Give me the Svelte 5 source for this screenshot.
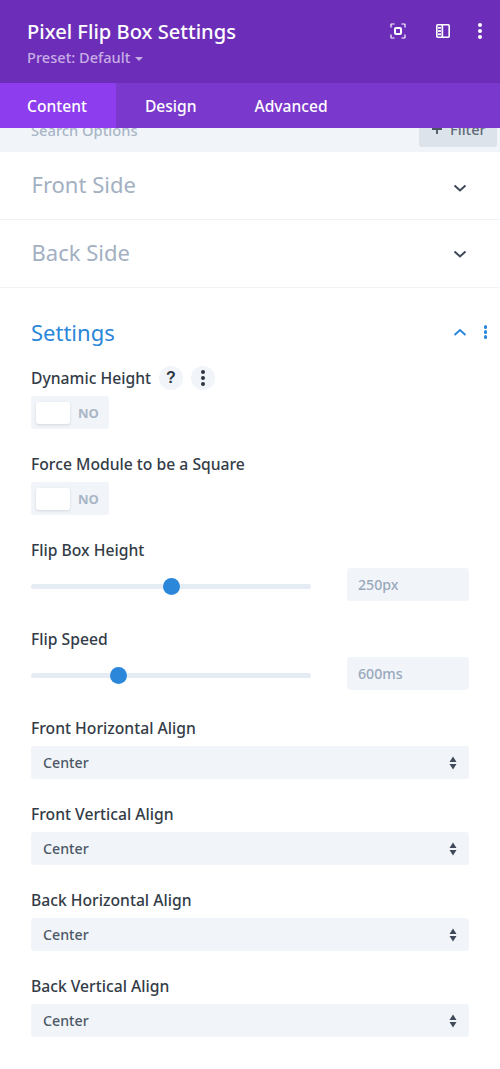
<script>
  const tabs = ['Content', 'Design', 'Advanced'];
  const closed = ['Front Side', 'Back Side'];
  const toggles = ['Force Module to be a Square'];
  const sliders = [
    { label: 'Flip Box Height', value: '250px', pos: 50.2 },
    { label: 'Flip Speed', value: '600ms', pos: 31.4 }
  ];
  const selects = ['Front Horizontal Align', 'Front Vertical Align', 'Back Horizontal Align', 'Back Vertical Align'];
</script>

<div class="panel">
  <header class="head">
    <div class="titles">
      <h1>Pixel Flip Box Settings</h1>
      <div class="preset">Preset: Default <span class="caret"></span></div>
    </div>
    <div class="head-icons">
      <svg width="16" height="16" viewBox="0 0 16 16" fill="none" stroke="#fff" stroke-width="1.2" aria-hidden="true">
        <path d="M1 4.5V1.5a.5.5 0 0 1 .5-.5h3M11.500 1h3a.5.5 0 0 1 .5.5v3M15 11.500v3a.5.5 0 0 1-.5.5h-3M4.500 15h-3a.5.5 0 0 1-.5-.5v-3" />
        <rect x="5" y="5" width="6" height="6" rx="1" stroke-width="2" />
      </svg>
      <svg width="14" height="14" viewBox="0 0 14 14" aria-hidden="true">
        <rect x="0.800" y="0.800" width="12.400" height="12.400" rx="1" fill="none" stroke="#fff" stroke-width="1.600" />
        <rect x="5.500" y="1" width="1.700" height="12" fill="#fff" />
        <rect x="2" y="3" width="3" height="1.700" fill="#fff" />
        <rect x="2" y="6.200" width="3" height="1.700" fill="#fff" />
        <rect x="2" y="9.400" width="3" height="1.700" fill="#fff" />
      </svg>
      <span class="dots white"><i></i><i></i><i></i></span>
    </div>
  </header>

  <nav class="tabs">
    {#each tabs as tab, i}
      <div class="tab" class:active={i === 0}>{tab}</div>
    {/each}
  </nav>

  <div class="search">
    <span class="search-text">Search Options</span>
    <span class="filter">
      <svg width="12" height="12" viewBox="0 0 12 12" aria-hidden="true"><path d="M6 1v10M1 6h10" stroke="#4b5563" stroke-width="1.800" /></svg>
      Filter
    </span>
  </div>

  {#each closed as name, i}
    <section class="group">
      <h2>{name}</h2>
      <svg class="chev" class:low={i === 0} width="14" height="9" viewBox="0 0 14 9" fill="none" stroke="#3e4a59" stroke-width="2" aria-hidden="true"><path d="M1.500 1.500 7 6.500l5.500-5" /></svg>
    </section>
  {/each}

  <section class="settings">
    <div class="settings-head">
      <h2>Settings</h2>
      <svg width="14" height="9" viewBox="0 0 14 9" fill="none" stroke="#2b87da" stroke-width="2" aria-hidden="true"><path d="M1.500 7 7 2l5.500 5" /></svg>
      <span class="dots blue"><i></i><i></i><i></i></span>
    </div>

    <div class="field">
      <div class="label">
        Dynamic Height
        <span class="round q">?</span>
        <span class="round"><span class="dots dark"><i></i><i></i><i></i></span></span>
      </div>
      <div class="toggle"><span class="knob"></span><span class="no">NO</span></div>
    </div>

    {#each toggles as label}
      <div class="field">
        <div class="label">{label}</div>
        <div class="toggle"><span class="knob"></span><span class="no">NO</span></div>
      </div>
    {/each}

    {#each sliders as s}
      <div class="field slider-field">
        <div class="label">{s.label}</div>
        <div class="slider-row">
          <div class="track"><span class="thumb" style="left: {s.pos}%"></span></div>
          <div class="value">{s.value}</div>
        </div>
      </div>
    {/each}

    {#each selects as label}
      <div class="field">
        <div class="label">{label}</div>
        <div class="select">
          Center
          <svg width="8" height="14" viewBox="0 0 8 14" fill="#3e4a59" aria-hidden="true"><path d="M4 0.500 7.500 6H.5zM4 13.500.5 8h7z" /></svg>
        </div>
      </div>
    {/each}
  </section>
</div>

<style>
  :global(body) {
    margin: 0;
    background: #fff;
  }
  .panel {
    width: 500px;
    height: 1069px;
    overflow: hidden;
    background: #fff;
    font-family: "Noto Sans", "Open Sans", sans-serif;
    color: #32373c;
  }
  .head {
    height: 83px;
    box-sizing: border-box;
    padding: 18px 18px 0 27px;
    background: #6c2eb9;
    display: flex;
    justify-content: space-between;
    align-items: flex-start;
  }
  h1 {
    margin: 0;
    font-size: 20.1px;
    line-height: 27px;
    font-weight: 500;
    color: #fff;
  }
  .preset {
    margin-top: 2px;
    font-size: 14.6px;
    line-height: 20px;
    font-weight: 500;
    color: #c7ace6;
  }
  .caret {
    display: inline-block;
    margin-left: 1px;
    vertical-align: 2px;
    border: 4px solid transparent;
    border-top-color: #c7ace6;
    border-bottom: 0;
  }
  .head-icons {
    display: flex;
    align-items: center;
    margin-top: 5px;
    height: 16px;
  }
  .head-icons svg:first-child {
    margin-right: 30px;
  }
  .head-icons svg:nth-child(2) {
    margin-right: 28px;
  }
  .dots {
    display: flex;
    flex-direction: column;
    gap: 2px;
  }
  .dots i {
    display: block;
    width: 4px;
    height: 4px;
    border-radius: 50%;
  }
  .dots.white i { background: #fff; }
  .dots.blue i { background: #2b87da; }
  .dots.dark i { background: #2f3540; }
  .tabs {
    display: flex;
    height: 45px;
    background: #7b38cc;
    position: relative;
    z-index: 1;
  }
  .tab {
    padding: 0 29px;
    font-size: 15.6px;
    font-weight: 500;
    line-height: 46px;
    color: #fff;
  }
  .tab.active {
    padding: 0 29px 0 27px;
    background: #8d3ded;
  }
  .search {
    height: 24px;
    background: #f1f5f9;
    display: flex;
    justify-content: space-between;
    align-items: flex-end;
    overflow: hidden;
    padding: 0 3px 5px 31px;
    box-sizing: border-box;
  }
  .search-text {
    font-size: 14.7px;
    line-height: 20px;
    margin-bottom: 7px;
    color: #a9b6c6;
    font-weight: 500;
  }
  .filter {
    display: flex;
    align-items: center;
    flex: none;
    gap: 7px;
    width: 78px;
    height: 36px;
    box-sizing: border-box;
    padding-left: 12px;
    background: #dde3ea;
    border-radius: 3px;
    font-size: 14.6px;
    font-weight: 500;
    color: #5f6b78;
  }
  .group {
    height: 68px;
    box-sizing: border-box;
    border-bottom: 1px solid #f1f3f5;
    padding: 0 33px 0 31.5px;
    display: flex;
    justify-content: space-between;
    align-items: center;
  }
  .group h2 {
    padding-bottom: 4px;
  }
  .chev {
    margin-top: 2px;
  }
  .chev.low {
    margin-top: 6px;
  }
  h2 {
    margin: 0;
    font-size: 22px;
    font-weight: 400;
    line-height: 30px;
    color: #a3b0c2;
  }
  .settings {
    padding: 29px 31px 0;
  }
  .settings-head {
    display: flex;
    align-items: center;
    margin-bottom: 18px;
    height: 30px;
  }
  .settings-head h2 {
    flex: 1;
    padding-bottom: 1px;
    color: #2b87da;
  }
  .settings-head svg {
    margin-right: 17px;
  }
  .settings-head .dots {
    margin-right: -18px;
    gap: 1.500px;
  }
  .settings-head .dots i {
    width: 3.500px;
    height: 3.500px;
  }
  .field {
    margin-bottom: 22px;
  }
  .slider-field {
    margin-bottom: 25px;
  }
  .label {
    display: flex;
    align-items: center;
    height: 26px;
    margin-bottom: 5px;
    font-size: 15.7px;
    font-weight: 500;
    color: #333c47;
  }
  .round {
    display: flex;
    align-items: center;
    justify-content: center;
    width: 24px;
    height: 24px;
    margin-left: 8px;
    border-radius: 50%;
    background: #f1f5f9;
  }
  .round.q {
    font-family: "Liberation Sans", sans-serif;
    font-size: 16px;
    font-weight: 700;
    color: #2f3540;
  }
  .toggle {
    display: flex;
    align-items: center;
    width: 78px;
    height: 33px;
    box-sizing: border-box;
    padding-left: 5px;
    border-radius: 3px;
    background: #f1f5f9;
  }
  .knob {
    width: 34px;
    height: 22px;
    border-radius: 3px;
    background: #fff;
    box-shadow: 0 1px 3px rgba(0, 0, 0, 0.12);
  }
  .no {
    margin-left: 8px;
    font-size: 13px;
    font-weight: 700;
    color: #a9b6c6;
  }
  .slider-row {
    display: flex;
    align-items: center;
    justify-content: space-between;
  }
  .track {
    position: relative;
    width: 280px;
    height: 5px;
    margin-top: 3px;
    border-radius: 3px;
    background: #e6ecf4;
  }
  .thumb {
    position: absolute;
    top: 50%;
    width: 17px;
    height: 17px;
    margin: -8.500px 0 0 -8.500px;
    border-radius: 50%;
    background: #2b87da;
  }
  .value {
    width: 122px;
    height: 33px;
    box-sizing: border-box;
    padding-left: 11px;
    border-radius: 3px;
    background: #f1f5f9;
    font-size: 14.2px;
    font-weight: 500;
    line-height: 33px;
    color: #9aa8bb;
  }
  .select {
    display: flex;
    align-items: center;
    justify-content: space-between;
    height: 33px;
    box-sizing: border-box;
    padding: 0 12px;
    border-radius: 3px;
    background: #f1f5f9;
    font-size: 14.2px;
    font-weight: 500;
    color: #4c5866;
  }
</style>
